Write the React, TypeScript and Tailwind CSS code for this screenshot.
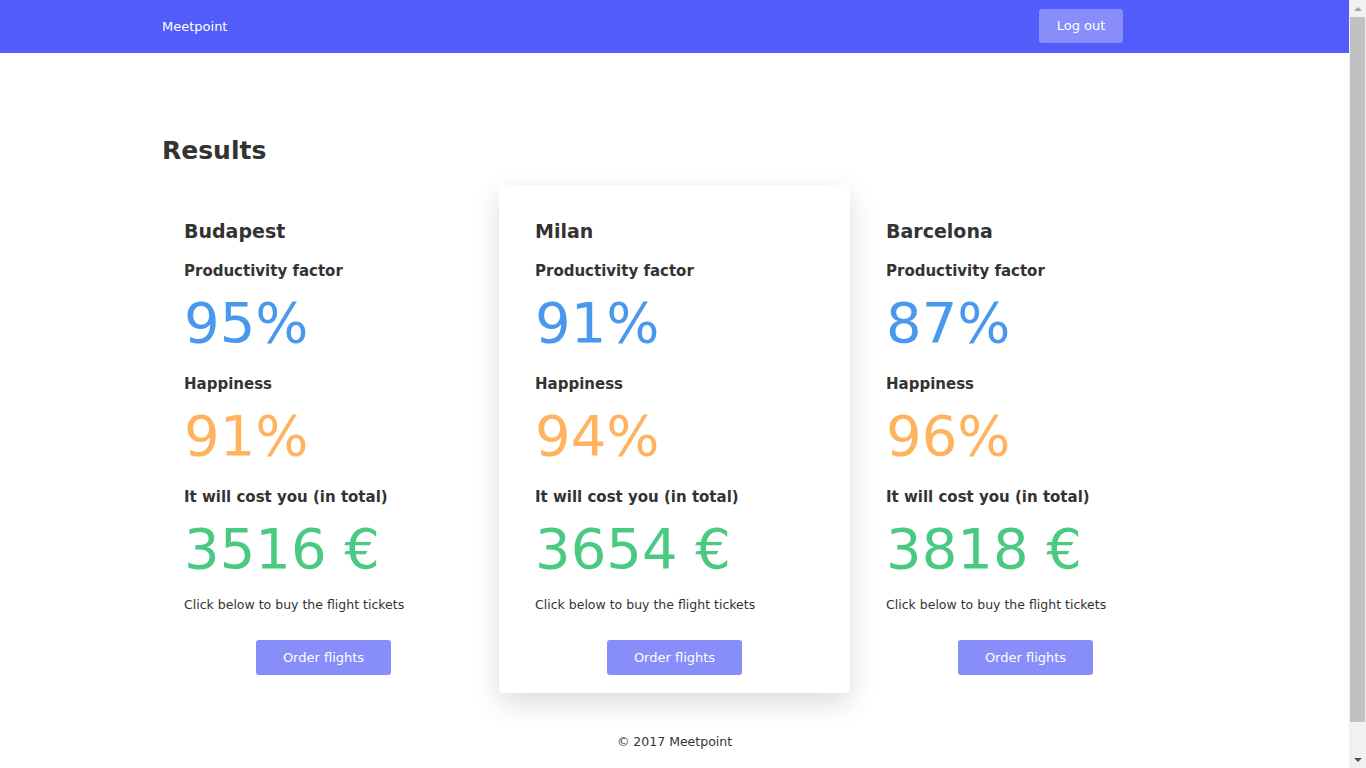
const cities = [
  { name: 'Budapest', productivity: 95, happiness: 91, cost: 3516, featured: false },
  { name: 'Milan', productivity: 91, happiness: 94, cost: 3654, featured: true },
  { name: 'Barcelona', productivity: 87, happiness: 96, cost: 3818, featured: false },
];

function CityCard({ city }: { city: (typeof cities)[number] }) {
  return (
    <div
      className={
        'w-[351px] px-[36px] pt-[32px] pb-[18px] rounded-[3px] ' +
        (city.featured ? 'bg-white shadow-[0_10px_28px_rgba(0,0,0,0.14)]' : '')
      }
    >
      <h2 className="text-[19px] leading-[28px] font-bold text-[#333]">{city.name}</h2>

      <h3 className="mt-[15px] text-[15px] leading-[22px] font-bold text-[#333]">Productivity factor</h3>
      <p className="mt-[9px] text-[56px] leading-[64px] text-[#4a98ee]">{city.productivity}%</p>

      <h3 className="mt-[18px] text-[15px] leading-[22px] font-bold text-[#333]">Happiness</h3>
      <p className="mt-[9px] text-[56px] leading-[64px] text-[#ffb35e]">{city.happiness}%</p>

      <h3 className="mt-[18px] text-[15px] leading-[22px] font-bold text-[#333]">It will cost you (in total)</h3>
      <p className="mt-[9px] text-[56px] leading-[64px] text-[#4ac983]">{city.cost} €</p>

      <p className="mt-[14px] text-[12.5px] leading-[20px] text-[#333]">Click below to buy the flight tickets</p>

      <div className="mt-[25px] flex justify-center">
        <button className="w-[135px] h-[35px] rounded-[3px] bg-[#878ef9] text-white text-[13px]">
          Order flights
        </button>
      </div>
    </div>
  );
}

function Scrollbar() {
  // browser scrollbar seen in the screenshot
  return (
    <div className="fixed right-0 top-0 h-screen w-[17px] bg-[#f1f1f1] flex flex-col items-center">
      <div className="h-[17px] flex items-center justify-center">
        <div className="w-0 h-0 border-x-[4px] border-x-transparent border-b-[4px] border-b-[#a3a3a3]" />
      </div>
      <div className="w-[15px] h-[705px] bg-[#c1c1c1]" />
      <div className="flex-1" />
      <div className="h-[17px] flex items-center justify-center">
        <div className="w-0 h-0 border-x-[4px] border-x-transparent border-t-[4px] border-t-[#505050]" />
      </div>
    </div>
  );
}

export default function App() {
  return (
    <div className="min-h-screen bg-white font-['DejaVu_Sans',sans-serif] text-[#333]">
      <div className="w-[1349px]">
        {/* Navbar */}
        <nav className="h-[53px] bg-[#525cfa]">
          <div className="mx-auto w-[1025px] h-full flex items-start justify-between">
            <span className="mt-[18px] text-white text-[13px] leading-[18px]">Meetpoint</span>
            <button className="mt-[9px] mr-[64px] w-[84px] h-[34px] rounded-[3px] bg-[#878ef9] text-white text-[13px]">
              Log out
            </button>
          </div>
        </nav>

        <main className="pb-[48px]">
          <div className="mx-auto w-[1025px] mt-[82px]">
            <h1 className="text-[25px] leading-[32px] font-bold text-[#333]">Results</h1>
          </div>

          <div className="mx-auto w-[1053px] mt-[18px] flex">
            {cities.map((city) => (
              <CityCard key={city.name} city={city} />
            ))}
          </div>

          <footer className="mt-[39px] text-center text-[12.5px] leading-[20px] text-[#333]">
            © 2017 Meetpoint
          </footer>
        </main>
      </div>
      <Scrollbar />
    </div>
  );
}
